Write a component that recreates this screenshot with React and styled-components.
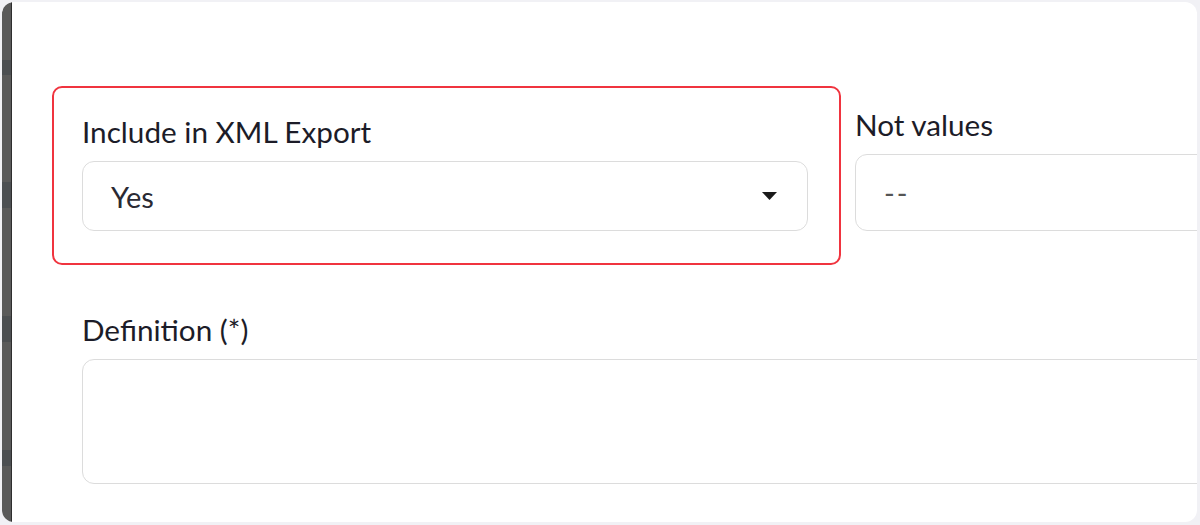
import React from "react";
import styled, { createGlobalStyle } from "styled-components";

const Global = createGlobalStyle`
  html, body { margin: 0; padding: 0; }
  body {
    background: #f1f1f5;
    font-family: Lato, "Open Sans", sans-serif;
    width: 1200px;
    height: 525px;
    overflow: hidden;
  }
  * { box-sizing: border-box; }
`;

const Frame = styled.div`
  width: 1200px;
  height: 525px;
  padding: 2px 3px 3px 2px;
`;

const Card = styled.div`
  display: flex;
  height: 100%;
  background: #ffffff;
  border-radius: 12px;
  overflow: hidden;
`;

const Strip = styled.div`
  flex: 0 0 10px;
  border-top-left-radius: 10px;
  border-bottom-left-radius: 6px;
  border-right: 1.5px solid #2e2e2e;
  background: linear-gradient(
    to bottom,
    #5a5a5a 0px, #5a5a5a 58px,
    #4c4f52 58px, #4c4f52 73px,
    #5a5a5a 73px, #5a5a5a 180px,
    #4c4f52 180px, #4c4f52 206px,
    #5a5a5a 206px, #5a5a5a 314px,
    #4c4f52 314px, #4c4f52 340px,
    #5a5a5a 340px, #5a5a5a 448px,
    #4c4f52 448px, #4c4f52 464px,
    #5a5a5a 464px
  );
`;

const Content = styled.div`
  flex: 1;
  min-width: 0;
  padding: 84px 0 0 40px;
`;

const Row = styled.div`
  display: flex;
  align-items: flex-start;
  gap: 14px;
  width: 1260px;
`;

const Highlight = styled.div`
  flex: 0 0 789px;
  border: 2px solid #f0343f;
  border-radius: 10px;
  padding: 26px 31px 32px 28px;
`;

const Field = styled.div`
  display: flex;
  flex-direction: column;
  flex: ${(p) => (p.$grow ? 1 : "none")};
  margin-top: ${(p) => p.$offset || 0}px;
`;

const Label = styled.label`
  display: block;
  font-size: 29.7px;
  line-height: 36px;
  color: #1c1c28;
  margin-bottom: 11px;
`;

const Control = styled.div`
  display: flex;
  align-items: center;
  height: ${(p) => p.$h}px;
  border: 1.5px solid #dcdcdc;
  border-radius: 12px;
  background: #fff;
  padding: 0 30px 0 28px;
  font-size: 29px;
  color: ${(p) => (p.$muted ? "#555" : "#2a2a33")};
`;

const Value = styled.span`
  flex: 1;
  letter-spacing: ${(p) => (p.$dash ? "2px" : "0")};
`;

const Caret = styled.svg`
  width: 15px;
  height: 8px;
  display: block;
`;

const Section = styled.div`
  margin-top: 47px;
  padding-left: 30px;
  width: 1200px;
`;

const TextArea = styled.div`
  height: 125px;
  border: 1.5px solid #dcdcdc;
  border-radius: 12px;
  background: #fff;
`;

export default function App() {
  return (
    <>
      <Global />
      <Frame>
        <Card>
          <Strip />
          <Content>
            <Row>
              <Highlight>
                <Field>
                  <Label>Include in XML Export</Label>
                  <Control $h={70}>
                    <Value>Yes</Value>
                    <Caret viewBox="0 0 15 8">
                      <path d="M0 0 H15 L7.5 8 Z" fill="#1a1a1a" />
                    </Caret>
                  </Control>
                </Field>
              </Highlight>
              <Field $grow $offset={21}>
                <Label>Not values</Label>
                <Control $h={77} $muted>
                  <Value $dash>--</Value>
                </Control>
              </Field>
            </Row>
            <Section>
              <Label>Definition (*)</Label>
              <TextArea />
            </Section>
          </Content>
        </Card>
      </Frame>
    </>
  );
}
